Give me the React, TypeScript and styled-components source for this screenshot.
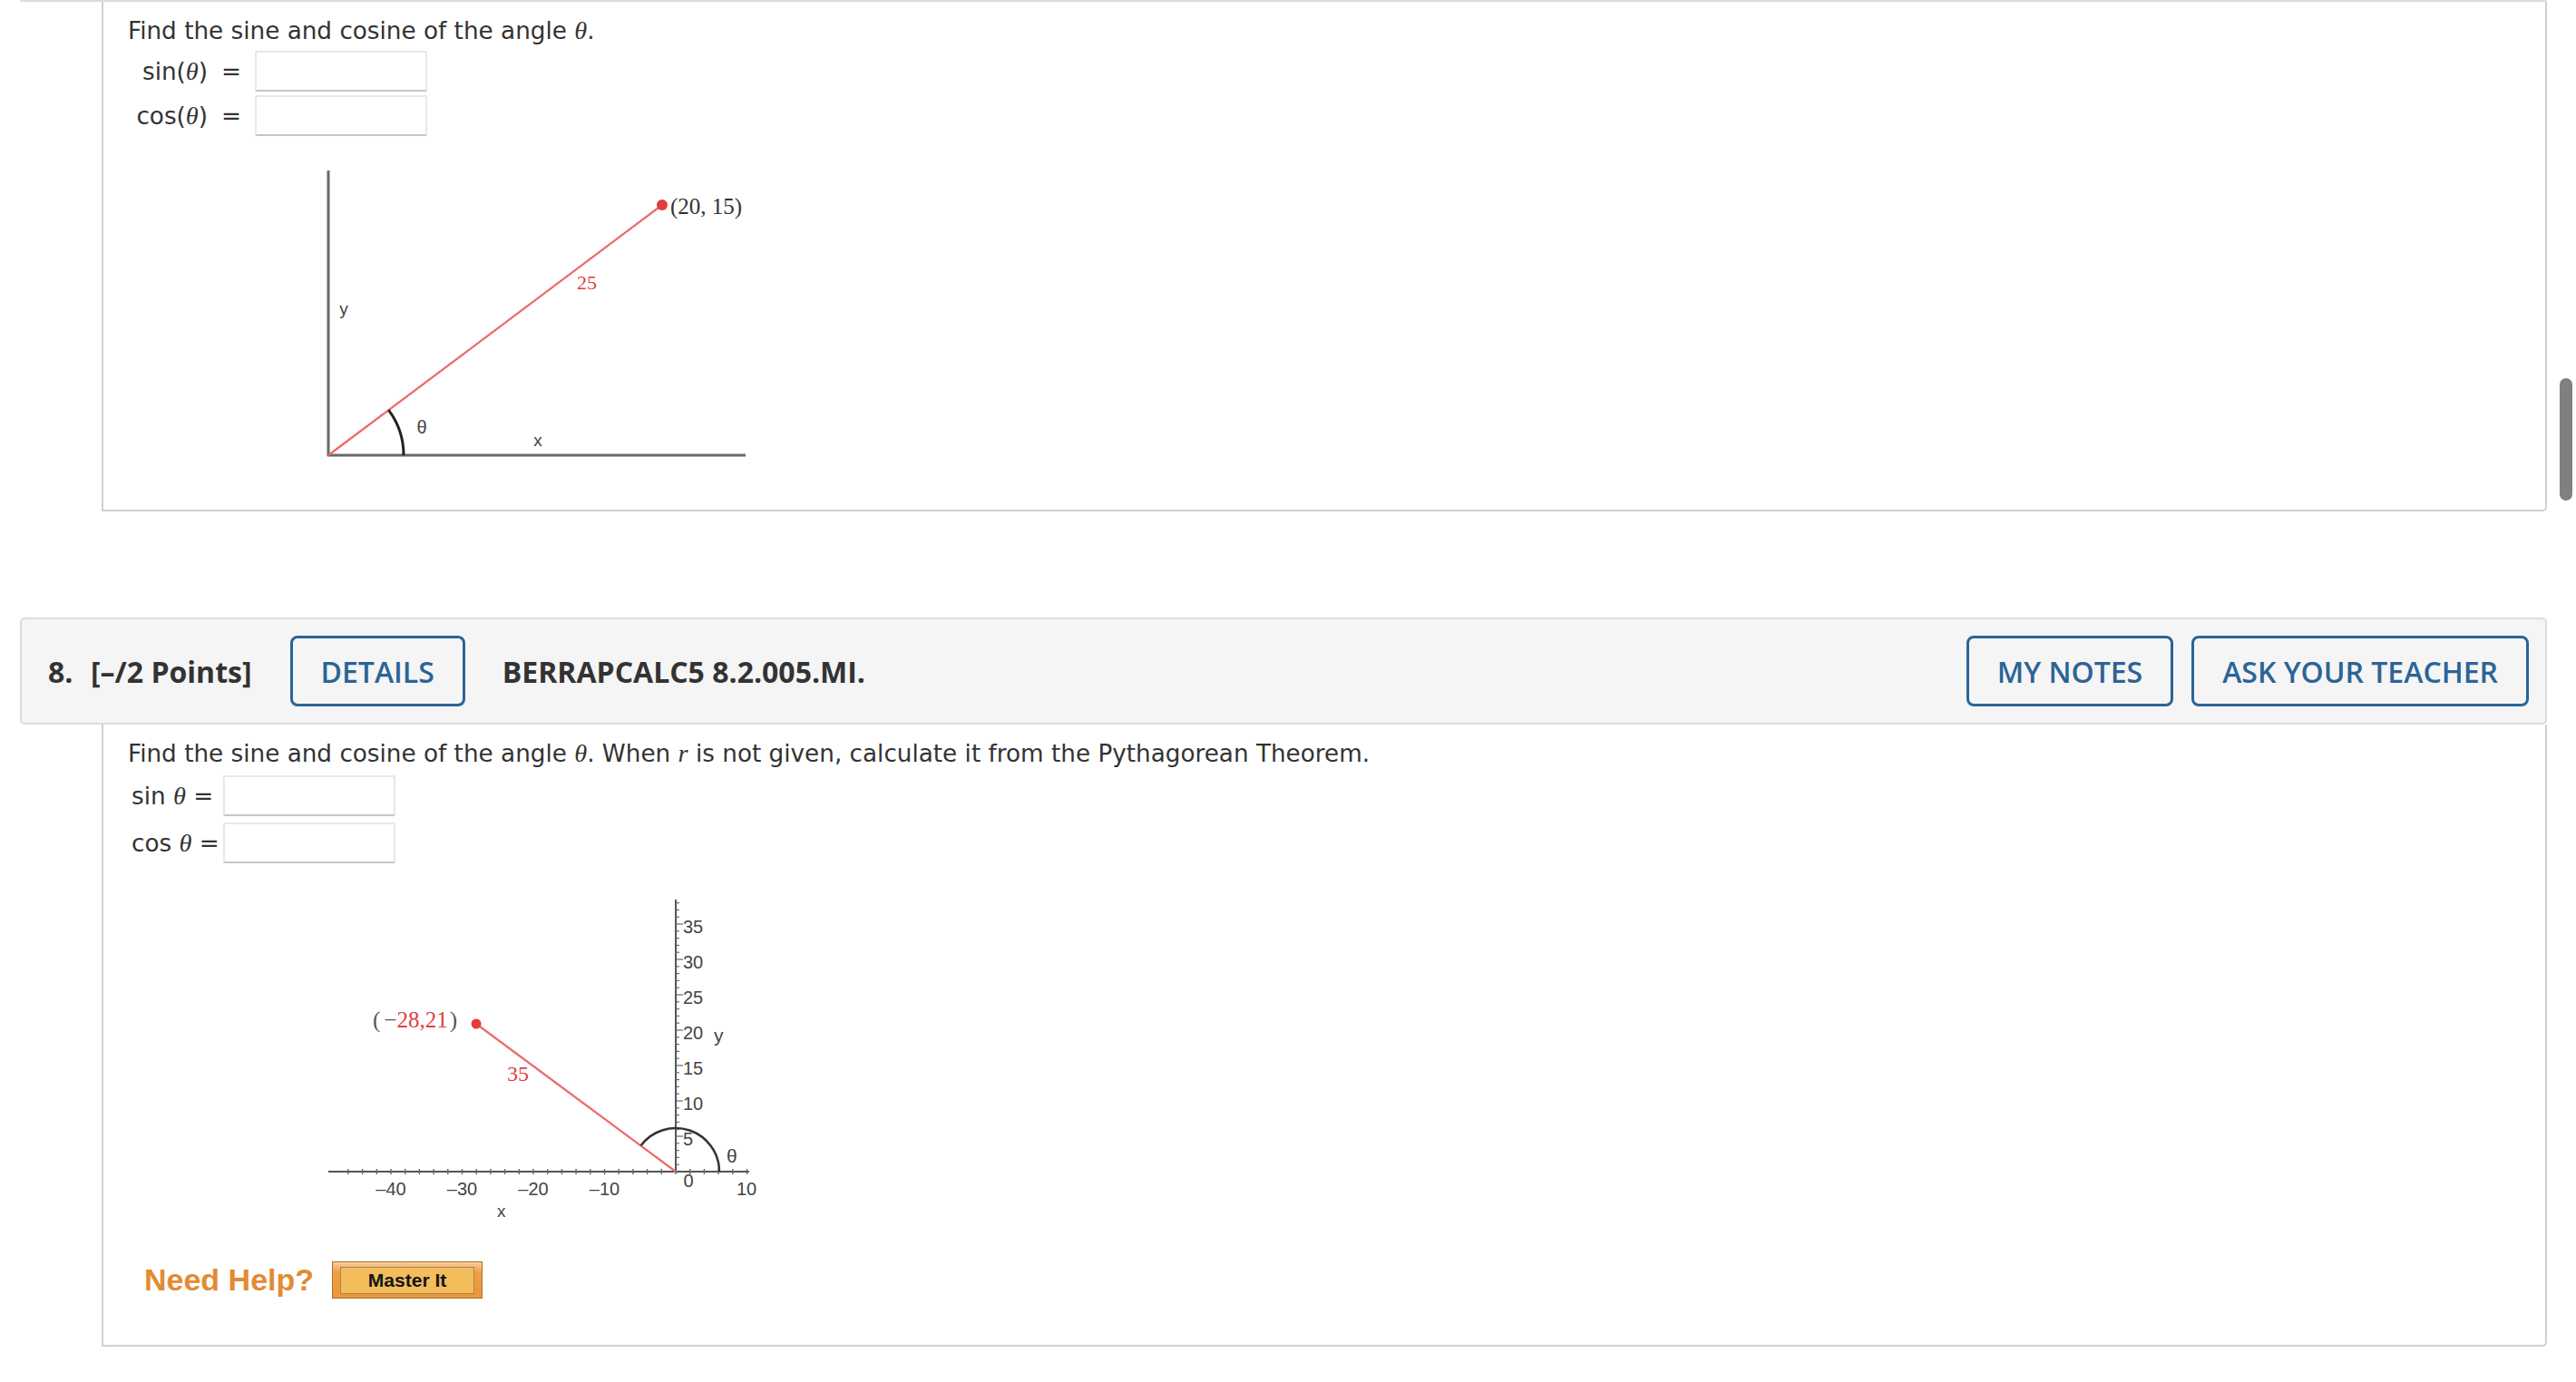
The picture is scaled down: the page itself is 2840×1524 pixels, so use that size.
import React from 'react'
import styled, { createGlobalStyle } from 'styled-components'

const GlobalStyle = createGlobalStyle`
  html, body {
    margin: 0;
    padding: 0;
    background: #fff;
  }
  body {
    width: 2840px;
    height: 1524px;
    overflow: hidden;
    font-family: "DejaVu Sans", Verdana, sans-serif;
    color: #333;
  }
`

const Page = styled.div`
  width: 2786px;
  padding-left: 22px;
`

// bottom edge of the previous question's header, cut off by the viewport
const HeaderTail = styled.div`
  height: 0;
  border: 2px solid #dcdcdc;
  border-top: none;
  border-radius: 0 0 5px 5px;
`

const QuestionHeader = styled.div`
  height: 114px;
  background: #f5f5f5;
  border: 2px solid #dcdcdc;
  border-radius: 5px;
  display: flex;
  align-items: center;
  padding: 0 18px 0 29px;
  font-family: "Open Sans", "Liberation Sans", sans-serif;
  color: #333;
`

const QNumber = styled.span`
  width: 47px;
  font-size: 32px;
  font-weight: 700;
`

const Points = styled.span`
  font-size: 32px;
  font-weight: 700;
  margin-right: 42px;
`

const Code = styled.span`
  font-size: 32px;
  font-weight: 700;
  margin-left: 41px;
`

const Spacer = styled.div`
  flex: 1;
`

const OutlineButton = styled.button`
  height: 78px;
  box-sizing: border-box;
  padding: 0 31px;
  background: transparent;
  border: 3px solid #2b6496;
  border-radius: 8px;
  color: #2b6496;
  font-family: "Open Sans", "Liberation Sans", sans-serif;
  font-size: 32px;
  font-weight: 600;
  & + & {
    margin-left: 20px;
  }
`

const QuestionBody = styled.div<{ $pt: number; $pb: number }>`
  margin-left: 90px;
  border: 2px solid #d0d0d0;
  border-top: none;
  border-radius: 0 0 5px 0;
  padding: ${p => p.$pt}px 27px ${p => p.$pb}px 27px;
`

const Gap = styled.div<{ $h: number }>`
  height: ${p => p.$h}px;
`

const Prompt = styled.div`
  font-size: 26.25px;
  line-height: 34px;
`

const MathVar = styled.i`
  font-family: "Liberation Serif", "Times New Roman", serif;
  font-style: italic;
  font-size: 1.08em;
  line-height: 1;
`

const AnswerGrid = styled.div<{ $cols: string; $mt: number; $gap: number }>`
  display: grid;
  grid-template-columns: ${p => p.$cols};
  row-gap: ${p => p.$gap}px;
  align-items: center;
  margin-top: ${p => p.$mt}px;
  font-size: 26.25px;
`

const Label = styled.span<{ $align: 'left' | 'right' }>`
  text-align: ${p => p.$align};
  padding-left: ${p => (p.$align === 'left' ? 4 : 0)}px;
  white-space: pre;
`

const Equals = styled.span`
  text-align: center;
`

const AnswerInput = styled.input`
  width: 190px;
  height: 45px;
  box-sizing: border-box;
  border: 2px solid #e8e8e8;
  border-bottom-color: #c6c6c6;
  border-radius: 2px;
  background: #fff;
`

const Figure = styled.svg<{ $mt: number; $ml: number }>`
  display: block;
  margin: ${p => p.$mt}px 0 0 ${p => p.$ml}px;
  overflow: visible;
`

const HelpRow = styled.div`
  display: flex;
  align-items: center;
  gap: 20px;
  margin: 37px 0 0 18px;
`

const NeedHelp = styled.span`
  font-family: "Liberation Sans", Arial, sans-serif;
  font-weight: 700;
  font-size: 34px;
  color: #e38b33;
`

const MasterIt = styled.button`
  width: 166px;
  height: 41px;
  box-sizing: border-box;
  padding: 5px 8px 4px;
  border: 1px solid #a8742f;
  background: linear-gradient(#f8cf9c 0%, #ef9f45 28%, #ec9637 100%);
  cursor: pointer;
`

const MasterInner = styled.span`
  display: flex;
  align-items: center;
  justify-content: center;
  height: 100%;
  box-sizing: border-box;
  border: 1px solid #a98358;
  background: #f3bd5c;
  font-family: "Liberation Sans", Arial, sans-serif;
  font-weight: 700;
  font-size: 21px;
  color: #151515;
`

const Scrollbar = styled.div`
  position: fixed;
  top: 417px;
  right: 4px;
  width: 14px;
  height: 135px;
  border-radius: 7px;
  background: #808080;
`

const sans = '"Liberation Sans", Arial, sans-serif'
const serif = '"Liberation Serif", "Times New Roman", serif'

const FirstGraph = () => (
  <Figure $mt={30} $ml={199} width={520} height={360} viewBox="340 180 520 360">
    <line x1={362} y1={188} x2={362} y2={503} stroke="#6a6a6a" strokeWidth={3} />
    <line x1={361} y1={502} x2={822} y2={502} stroke="#6a6a6a" strokeWidth={3} />
    <line x1={362} y1={502} x2={730} y2={226} stroke="#ec6a6a" strokeWidth={2.2} />
    <circle cx={730} cy={226} r={6} fill="#e23c3c" />
    <path d="M 445 502 A 83 83 0 0 0 428.4 452.2" stroke="#222" strokeWidth={3} fill="none" />
    <text x={739} y={236} fontFamily={serif} fontSize={25} fill="#333">(20, 15)</text>
    <text x={647} y={319} fontFamily={serif} fontSize={22} fill="#e04040" textAnchor="middle">25</text>
    <text x={379} y={347} fontFamily={sans} fontSize={19} fill="#444" textAnchor="middle">y</text>
    <text x={465} y={478} fontFamily={sans} fontSize={20} fill="#444" textAnchor="middle">θ</text>
    <text x={593} y={492} fontFamily={sans} fontSize={19} fill="#444" textAnchor="middle">x</text>
  </Figure>
)

const UNIT = 7.85
const OX = 745
const OY = 1293

const SecondGraph = () => {
  const xTicks = []
  for (let u = -46; u <= 10; u += 2) {
    const x = OX + u * UNIT
    xTicks.push(<line key={u} x1={x} y1={1290} x2={x} y2={1296} stroke="#666" strokeWidth={1.4} />)
  }
  const yTicks = []
  for (let u = 1; u <= 38; u++) {
    const y = OY - u * 7.8
    const major = u % 5 === 0
    yTicks.push(<line key={u} x1={OX} y1={y} x2={OX + (major ? 8 : 4)} y2={y} stroke="#666" strokeWidth={1.2} />)
  }
  const yLabels = [5, 10, 15, 20, 25, 30, 35]
  const xLabels = [-40, -30, -20, -10]

  return (
    <Figure $mt={22} $ml={199} width={540} height={380} viewBox="340 975 540 380">
      <line x1={362} y1={OY} x2={826} y2={OY} stroke="#555" strokeWidth={2} />
      <line x1={OX} y1={993} x2={OX} y2={OY + 1} stroke="#555" strokeWidth={2} />
      {xTicks}
      {yTicks}
      {yLabels.map(v => (
        <text key={v} x={753} y={OY - v * 7.8 + 10} fontFamily={sans} fontSize={20} fill="#444">
          {v}
        </text>
      ))}
      {xLabels.map(v => (
        <text key={v} x={OX + v * UNIT} y={1319} fontFamily={sans} fontSize={20} fill="#444" textAnchor="middle">
          {'–' + Math.abs(v)}
        </text>
      ))}
      <text x={759} y={1310} fontFamily={sans} fontSize={20} fill="#444" textAnchor="middle">0</text>
      <text x={823} y={1319} fontFamily={sans} fontSize={20} fill="#444" textAnchor="middle">10</text>
      <line x1={OX} y1={OY} x2={525} y2={1130} stroke="#ec6a6a" strokeWidth={2.2} />
      <circle cx={525} cy={1130} r={5.5} fill="#e23c3c" />
      <path d="M 793 1293 A 48 48 0 0 0 706.6 1264.2" stroke="#333" strokeWidth={2.5} fill="none" />
      <text x={411} y={1134} fontFamily={serif} fontSize={25} fill="#555">
        (<tspan dx={4}>−</tspan>
        <tspan fill="#e04040">28,21</tspan>
        <tspan dx={2}>)</tspan>
      </text>
      <text x={559} y={1193} fontFamily={serif} fontSize={24} fill="#e04040">35</text>
      <text x={787} y={1150} fontFamily={sans} fontSize={21} fill="#444">y</text>
      <text x={801} y={1283} fontFamily={sans} fontSize={21} fill="#444">θ</text>
      <text x={548} y={1343} fontFamily={sans} fontSize={19} fill="#444">x</text>
    </Figure>
  )
}

export default function App() {
  return (
    <>
      <GlobalStyle />
      <Page>
        <HeaderTail />
        <QuestionBody $pt={15} $pb={22}>
          <Prompt>
            Find the sine and cosine of the angle <MathVar>θ</MathVar>.
          </Prompt>
          <AnswerGrid $cols="88px 52px 190px" $mt={5} $gap={4}>
            <Label $align="right">
              sin(<MathVar>θ</MathVar>)
            </Label>
            <Equals>=</Equals>
            <AnswerInput />
            <Label $align="right">
              cos(<MathVar>θ</MathVar>)
            </Label>
            <Equals>=</Equals>
            <AnswerInput />
          </AnswerGrid>
          <FirstGraph />
        </QuestionBody>

        <Gap $h={117} />

        <QuestionHeader>
          <QNumber>8.</QNumber>
          <Points>[–/2 Points]</Points>
          <OutlineButton>DETAILS</OutlineButton>
          <Code>BERRAPCALC5 8.2.005.MI.</Code>
          <Spacer />
          <OutlineButton>MY NOTES</OutlineButton>
          <OutlineButton>ASK YOUR TEACHER</OutlineButton>
        </QuestionHeader>
        <QuestionBody $pt={15} $pb={51}>
          <Prompt>
            Find the sine and cosine of the angle <MathVar>θ</MathVar>. When <MathVar>r</MathVar> is not given,
            calculate it from the Pythagorean Theorem.
          </Prompt>
          <AnswerGrid $cols="105px 190px" $mt={7} $gap={7}>
            <Label $align="left">
              sin <MathVar>θ</MathVar> =
            </Label>
            <AnswerInput />
            <Label $align="left">
              cos <MathVar>θ</MathVar> =
            </Label>
            <AnswerInput />
          </AnswerGrid>
          <SecondGraph />
          <HelpRow>
            <NeedHelp>Need Help?</NeedHelp>
            <MasterIt>
              <MasterInner>Master It</MasterInner>
            </MasterIt>
          </HelpRow>
        </QuestionBody>
      </Page>
      <Scrollbar />
    </>
  )
}
